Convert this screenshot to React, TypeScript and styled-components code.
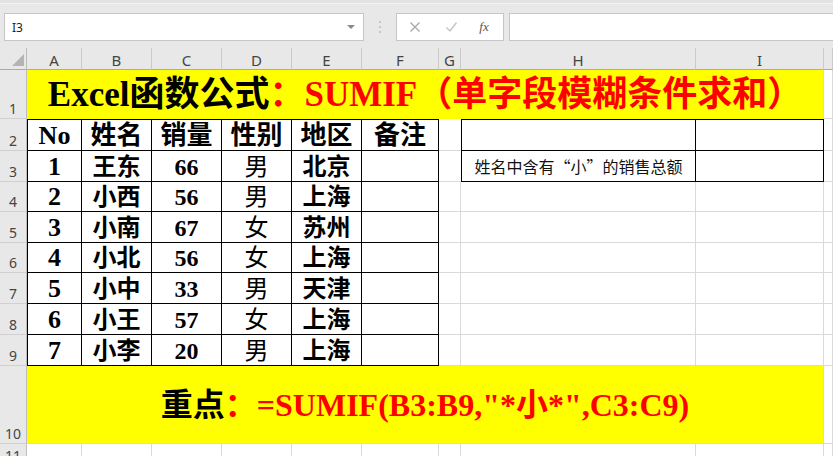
import React from 'react';
import styled, { createGlobalStyle } from 'styled-components';

const GRID = '#d9d9d9';
const BLACK = '#000';
const HEAD_BG = '#e8e8e8';

const Global = createGlobalStyle`
  html, body { margin: 0; padding: 0; background: #fff; }
  body { font-family: "Noto Sans CJK SC", sans-serif; overflow: hidden; }
`;

const Page = styled.div`
  width: 833px;
  height: 456px;
  overflow: hidden;
  display: flex;
  flex-direction: column;
  background: #fff;
`;

const Toolbar = styled.div`
  flex: none;
  height: 48px;
  box-sizing: border-box;
  background: ${HEAD_BG};
  border-top: 3px solid #e2e2e2;
  box-shadow: inset 0 1px 0 #f4f4f4;
  display: flex;
  align-items: flex-start;
  padding: 10px 0 0 4px;
`;

const NameBox = styled.div`
  width: 360px;
  height: 28px;
  box-sizing: border-box;
  background: #fff;
  border: 1px solid #c6c6c6;
  display: flex;
  align-items: center;
  justify-content: space-between;
  padding: 0 6px 0 7px;
  font-family: "Noto Sans", "Liberation Sans", sans-serif;
  font-size: 12px;
  color: #222;
`;

const DropTri = styled.span`
  width: 0;
  height: 0;
  border-left: 4px solid transparent;
  border-right: 4px solid transparent;
  border-top: 4px solid #8a8a8a;
  margin-right: 2px;
`;

const Dots = styled.div`
  width: 32px;
  height: 28px;
  display: flex;
  align-items: center;
  justify-content: center;
`;

const FxGroup = styled.div`
  width: 108px;
  height: 28px;
  box-sizing: border-box;
  background: #fff;
  border: 1px solid #c6c6c6;
  display: grid;
  grid-template-columns: 36px 36px 1fr;
  align-items: center;
  justify-items: center;
`;

const FxText = styled.span`
  font-family: "Liberation Serif", serif;
  font-style: italic;
  font-size: 13px;
  color: #555;
  margin-right: 4px;
`;

const FormulaInput = styled.div`
  flex: 1;
  height: 28px;
  margin-left: 5px;
  box-sizing: border-box;
  background: #fff;
  border: 1px solid #c6c6c6;
  border-right: none;
`;

const Sheet = styled.div`
  flex: none;
  display: grid;
  grid-template-columns: 27px 55px 70px 70px 70px 70px 77px 22px 235px 128px 1fr;
  grid-template-rows: 22px 49px 32px 31px 30px 31px 30px 31px 31px 31px 78px 22px;
`;

const Corner = styled.div`
  box-sizing: border-box;
  background: ${HEAD_BG};
  border-right: 1px solid #bdbdbd;
  border-bottom: 1px solid #ababab;
  display: flex;
  align-items: flex-end;
  justify-content: flex-end;
  padding: 0 2px 3px 0;
`;

const ColHead = styled.div`
  box-sizing: border-box;
  background: ${HEAD_BG};
  border-right: 1px solid #cacaca;
  border-bottom: 1px solid #ababab;
  display: flex;
  align-items: flex-end;
  justify-content: center;
  padding-bottom: 1px;
  font-family: "Noto Sans", "Liberation Sans", sans-serif;
  font-size: 15px;
  line-height: 1;
  color: #444;
`;

const RowHead = styled.div`
  box-sizing: border-box;
  background: ${HEAD_BG};
  border-right: 1px solid #bdbdbd;
  border-bottom: 1px solid #d0d0d0;
  display: flex;
  align-items: flex-end;
  justify-content: center;
  padding-bottom: 2px;
  font-family: "Noto Sans", "Liberation Sans", sans-serif;
  font-size: 14px;
  line-height: 1;
  color: #444;
`;

type EdgeProps = { $t?: string; $r?: string; $b?: string; $l?: string; $span?: number };

const Cell = styled.div<EdgeProps>`
  box-sizing: border-box;
  min-width: 0;
  grid-column: span ${p => p.$span ?? 1};
  border-top: ${p => (p.$t ? `1px solid ${p.$t}` : 'none')};
  border-right: 1px solid ${p => p.$r ?? GRID};
  border-bottom: ${p => (p.$b === 'none' ? 'none' : `1px solid ${p.$b ?? GRID}`)};
  border-left: ${p => (p.$l ? `1px solid ${p.$l}` : 'none')};
  display: flex;
  align-items: center;
  justify-content: center;
  white-space: nowrap;
`;

const DataCell = styled(Cell)<{ $size: number; $light?: boolean }>`
  font-family: "Liberation Serif", "Noto Sans CJK SC", serif;
  font-size: ${p => p.$size}px;
  font-weight: ${p => (p.$light ? 400 : 700)};
  color: #000;
  line-height: 1;
  padding-top: 1px;
`;

const Banner = styled(Cell)<{ $size: number }>`
  background: #ffff00;
  font-family: "Liberation Serif", "Noto Sans CJK SC", serif;
  font-size: ${p => p.$size}px;
  font-weight: 700;
  line-height: 1;
`;

const Ink = styled.span<{ $red?: boolean }>`
  color: ${p => (p.$red ? '#ff0000' : '#000')};
`;

const Note = styled(Cell)`
  font-family: "Noto Sans CJK SC", sans-serif;
  font-size: 16px;
  color: #111;
  line-height: 1;
`;

const cols = ['A', 'B', 'C', 'D', 'E', 'F', 'G', 'H', 'I', ''];
const heads = ['No', '姓名', '销量', '性别', '地区', '备注'];
const data = [
  ['1', '王东', '66', '男', '北京'],
  ['2', '小西', '56', '男', '上海'],
  ['3', '小南', '67', '女', '苏州'],
  ['4', '小北', '56', '女', '上海'],
  ['5', '小中', '33', '男', '天津'],
  ['6', '小王', '57', '女', '上海'],
  ['7', '小李', '20', '男', '上海'],
];

const CloseIcon = () => (
  <svg width="12" height="12" viewBox="0 0 12 12">
    <path d="M1.5 1.5 L10.5 10.5 M10.5 1.5 L1.5 10.5" stroke="#a8a8a8" strokeWidth="1.3" fill="none" />
  </svg>
);

const CheckIcon = () => (
  <svg width="13" height="12" viewBox="0 0 13 12">
    <path d="M1.5 6.5 L5 10 L11.5 1.5" stroke="#c4c4c4" strokeWidth="1.4" fill="none" />
  </svg>
);

const DotsIcon = () => (
  <svg width="4" height="14" viewBox="0 0 4 14">
    <circle cx="2" cy="2" r="1" fill="#bdbdbd" />
    <circle cx="2" cy="7" r="1" fill="#bdbdbd" />
    <circle cx="2" cy="12" r="1" fill="#bdbdbd" />
  </svg>
);

const CornerTri = () => (
  <svg width="12" height="12" viewBox="0 0 12 12">
    <polygon points="0,12 12,12 12,0" fill="#b4b4b4" />
  </svg>
);

export default function App() {
  const rowsOut: React.ReactNode[] = [];

  rowsOut.push(
    <Corner key="corner">
      <CornerTri />
    </Corner>
  );
  cols.forEach((c, i) => rowsOut.push(<ColHead key={`ch${i}`}>{c}</ColHead>));

  rowsOut.push(<RowHead key="r1">1</RowHead>);
  rowsOut.push(
    <Banner key="title" $span={9} $size={35} $b="none">
      <Ink>Excel函数公式</Ink>
      <Ink $red>：SUMIF（单字段模糊条件求和）</Ink>
    </Banner>
  );
  rowsOut.push(<Cell key="j1" />);

  rowsOut.push(<RowHead key="r2">2</RowHead>);
  heads.forEach((h, i) =>
    rowsOut.push(
      <DataCell key={`h${i}`} $size={26} $t={BLACK} $r={BLACK} $b={BLACK} $l={i === 0 ? BLACK : undefined}>
        {h}
      </DataCell>
    )
  );
  rowsOut.push(<Cell key="g2" $r="transparent" />);
  rowsOut.push(<Cell key="h2" $t={BLACK} $l={BLACK} $r={BLACK} $b={BLACK} />);
  rowsOut.push(<Cell key="i2" $t={BLACK} $r={BLACK} $b={BLACK} />);
  rowsOut.push(<Cell key="j2" />);

  data.forEach((row, ri) => {
    const n = ri + 3;
    rowsOut.push(<RowHead key={`r${n}`}>{n}</RowHead>);
    row.forEach((v, ci) =>
      rowsOut.push(
        <DataCell
          key={`d${n}-${ci}`}
          $size={ci === 0 ? 26 : 24}
          $light={ci === 3}
          $r={BLACK}
          $b={BLACK}
          $l={ci === 0 ? BLACK : undefined}
        >
          {v}
        </DataCell>
      )
    );
    rowsOut.push(<DataCell key={`f${n}`} $size={24} $r={BLACK} $b={BLACK} />);
    if (n === 3) {
      rowsOut.push(<Cell key="g3" $r="transparent" />);
      rowsOut.push(
        <Note key="h3" $l={BLACK} $r={BLACK} $b={BLACK}>
          姓名中含有“小”的销售总额
        </Note>
      );
      rowsOut.push(<Cell key="i3" $r={BLACK} $b={BLACK} />);
    } else {
      rowsOut.push(<Cell key={`g${n}`} />);
      rowsOut.push(<Cell key={`h${n}`} />);
      rowsOut.push(<Cell key={`i${n}`} />);
    }
    rowsOut.push(<Cell key={`j${n}`} />);
  });

  rowsOut.push(<RowHead key="r10">10</RowHead>);
  rowsOut.push(
    <Banner key="key" $span={9} $size={32}>
      <Ink>重点</Ink>
      <Ink $red>：=SUMIF(B3:B9,"*小*",C3:C9)</Ink>
    </Banner>
  );
  rowsOut.push(<Cell key="j10" />);

  rowsOut.push(<RowHead key="r11">11</RowHead>);
  cols.forEach((_, i) => rowsOut.push(<Cell key={`e11-${i}`} />));

  return (
    <Page>
      <Global />
      <Toolbar>
        <NameBox>
          <span>I3</span>
          <DropTri />
        </NameBox>
        <Dots>
          <DotsIcon />
        </Dots>
        <FxGroup>
          <CloseIcon />
          <CheckIcon />
          <FxText>fx</FxText>
        </FxGroup>
        <FormulaInput />
      </Toolbar>
      <Sheet>{rowsOut}</Sheet>
    </Page>
  );
}
